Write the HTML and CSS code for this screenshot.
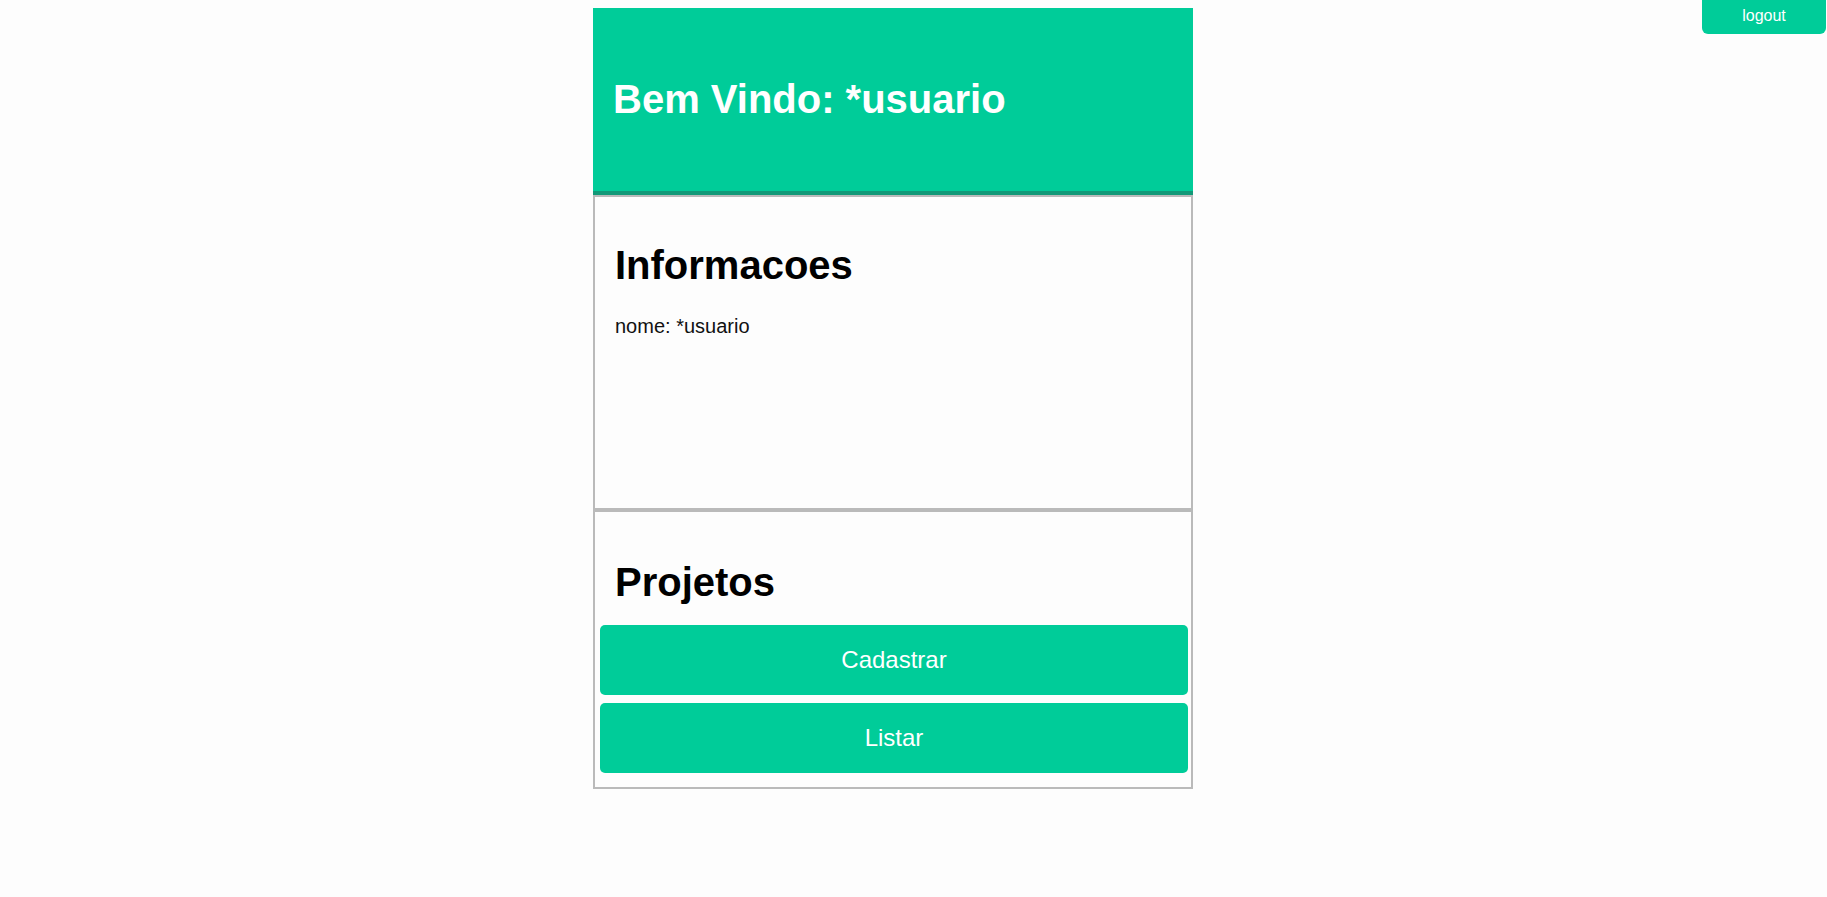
FILE: index.html
```html
<!DOCTYPE html>
<html lang="pt">
<head>
<meta charset="utf-8">
<title>Bem Vindo</title>
<link rel="stylesheet" href="styles.css">
</head>
<body>
  <button class="logout">logout</button>
  <main class="page">
    <header class="banner">
      <h1 class="banner-title">Bem Vindo: *usuario</h1>
    </header>
    <section class="card info">
      <h1 class="card-title">Informacoes</h1>
      <p class="info-line">nome: *usuario</p>
    </section>
    <section class="card projects">
      <h1 class="card-title projects-title">Projetos</h1>
      <div class="actions">
        <button class="action">Cadastrar</button>
        <button class="action">Listar</button>
      </div>
    </section>
  </main>
</body>
</html>
```
FILE: styles.css
```css
html, body {
  margin: 0;
  padding: 0;
}
body {
  background: #fdfdfd;
  font-family: "Liberation Sans", Arial, sans-serif;
  color: #000;
  padding: 8px;
}
.logout {
  position: absolute;
  top: 0;
  right: 1px;
  width: 124px;
  height: 34px;
  border: none;
  border-radius: 0 0 6px 6px;
  background: #00cc99;
  color: #fff;
  font-family: "Liberation Sans", Arial, sans-serif;
  font-size: 16px;
  padding: 0 0 3px;
  cursor: pointer;
}
.page {
  width: 600px;
  margin-left: 585px;
}
.banner {
  height: 183px;
  background: #00cc99;
  border-bottom: 4px solid #129978;
  display: flex;
  align-items: center;
  padding: 0 20px;
}
.banner-title {
  margin: 0;
  font-size: 40px;
  font-weight: bold;
  color: #fff;
  line-height: 46px;
  position: relative;
  top: -1px;
}
.card {
  border: 2px solid #bababa;
  box-sizing: border-box;
}
.info {
  height: 315px;
  padding: 18px 20px;
}
.card-title {
  font-size: 40px;
  line-height: 46px;
  font-weight: bold;
  margin: 26.5px 0 27px;
}
.info-line {
  font-size: 20px;
  line-height: 23px;
  margin: 0;
  color: #111;
}
.projects {
  border-top: 2px solid #bababa;
  padding: 47px 3px 14px 5px;
}
.projects-title {
  margin: 0 0 20px 15px;
}
.actions {
  display: flex;
  flex-direction: column;
  gap: 8px;
}
.action {
  height: 70px;
  border: none;
  border-radius: 5px;
  background: #00cc99;
  color: #fff;
  font-family: "Liberation Sans", Arial, sans-serif;
  font-size: 24px;
  cursor: pointer;
}
```
